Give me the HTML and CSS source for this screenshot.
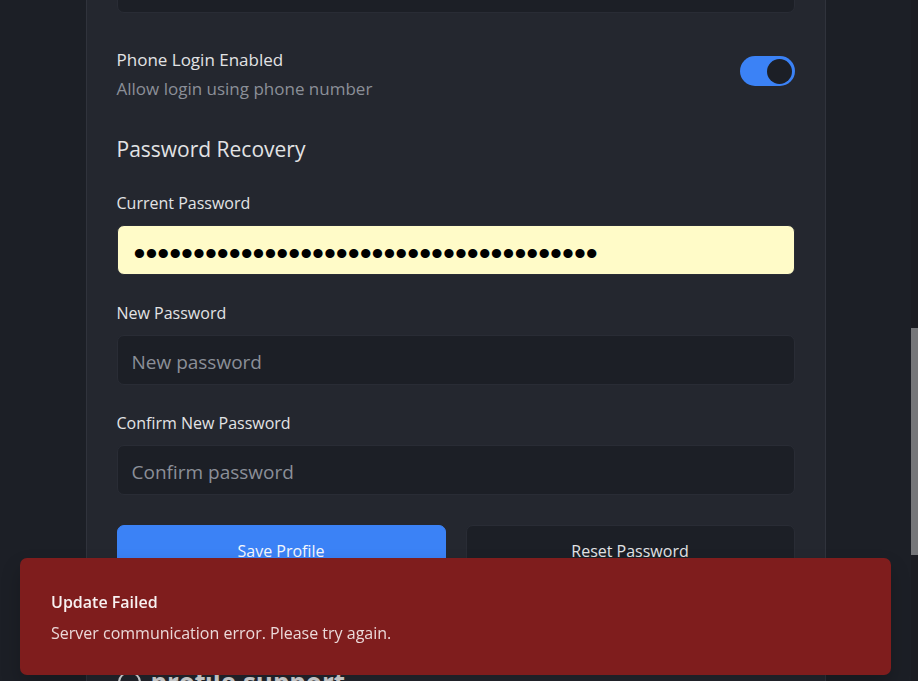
FILE: index.html
```html
<!DOCTYPE html>
<html lang="en">
<head>
<meta charset="utf-8">
<meta name="viewport" content="width=device-width, initial-scale=1">
<title>Profile settings</title>
<link rel="stylesheet" href="styles.css">
</head>
<body>
<main class="page">
  <form class="card">
    <input class="input" type="tel" aria-label="Phone number">
    <div class="setting">
      <div class="setting-text">
        <label class="setting-label" for="phone-login">Phone Login Enabled</label>
        <p class="hint">Allow login using phone number</p>
      </div>
      <input class="switch" type="checkbox" role="switch" id="phone-login" checked>
    </div>
    <h2 class="heading">Password Recovery</h2>
    <div class="field">
      <label class="label" for="current">Current Password</label>
      <input class="input input-filled" type="password" id="current" value="000000000000000000000000000000000000000">
    </div>
    <div class="field">
      <label class="label" for="new">New Password</label>
      <input class="input" type="password" id="new" placeholder="New password">
    </div>
    <div class="field">
      <label class="label" for="confirm">Confirm New Password</label>
      <input class="input" type="password" id="confirm" placeholder="Confirm password">
    </div>
    <div class="actions">
      <button class="button button-primary" type="submit">Save Profile</button>
      <button class="button" type="button">Reset Password</button>
    </div>
    <h2 class="support">
      <svg class="support-icon" viewBox="0 0 24 24" aria-hidden="true"><circle cx="12" cy="12" r="10"/></svg>
      profile support
    </h2>
  </form>
</main>
<div class="scrollbar"><div class="thumb"></div></div>
<div class="toast" role="alert">
  <strong class="toast-title">Update Failed</strong>
  <p class="toast-text">Server communication error. Please try again.</p>
</div>
</body>
</html>
```
FILE: styles.css
```css
* {
  box-sizing: border-box;
}

body {
  margin: 0;
  height: 100vh;
  overflow: hidden;
  display: flex;
  background: #1c1f26;
  color: #e2e3e5;
  font: 16px/24px "Segoe UI", "Open Sans", "Noto Sans", sans-serif;
}

p,
h2 {
  margin: 0;
}

.page {
  flex: 1;
  padding: 0 20px;
}

.card {
  max-width: 740px;
  margin: -37px auto 0;
  padding: 0 30px;
  background: #24272f;
  border: 1px solid #30333c;
  border-width: 0 1px;
}

.input {
  display: block;
  width: 100%;
  height: 50px;
  padding: 3px 14px 0;
  background: #1c1f26;
  border: 1px solid #292c35;
  border-radius: 7px;
  color: #e2e3e5;
  font: inherit;
  font-size: 19px;
}

.input::placeholder {
  color: #8b8f98;
  opacity: 1;
}

.input-filled {
  padding: 6px 16px 0;
  background: #fffbc8;
  color: #000;
  font: 34px "Liberation Sans", sans-serif;
}

.setting {
  display: flex;
  align-items: center;
  justify-content: space-between;
  margin-top: 27px;
  font-size: 17px;
}

.setting-text {
  padding-top: 8px;
}

.setting-label,
.label {
  display: block;
}

.hint {
  margin-top: 5px;
  color: #8b8f98;
}

.switch {
  appearance: none;
  display: flex;
  width: 55px;
  height: 30px;
  margin: 0;
  padding: 3px;
  border-radius: 15px;
  background: #3b82f6;
}

.switch::before {
  content: "";
  width: 25px;
  height: 25px;
  border-radius: 50%;
  background: #1c1f26;
}

.switch:checked {
  justify-content: flex-end;
}

.heading {
  margin-top: 33px;
  font-size: 21px;
  font-weight: 400;
  line-height: 30px;
}

.field {
  display: grid;
  gap: 10px;
  margin-top: 26px;
}

.heading + .field {
  margin-top: 27px;
}

.actions {
  display: grid;
  grid-template-columns: 1fr 1fr;
  gap: 20px;
  margin-top: 30px;
}

.button {
  height: 52px;
  border: 1px solid #292c35;
  border-radius: 7px;
  background: #1c1f26;
  color: inherit;
  font: inherit;
}

.button-primary {
  border-color: #3b82f6;
  background: #3b82f6;
  color: #f4f7fc;
}

.support {
  display: flex;
  align-items: center;
  gap: 9px;
  margin-top: 89px;
  font-size: 26px;
  line-height: 32px;
}

.support-icon {
  width: 25px;
  height: 25px;
  fill: none;
  stroke: currentColor;
  stroke-width: 2;
}

.scrollbar {
  width: 7px;
  background: #1b1c22;
}

.thumb {
  height: 227px;
  margin-top: 328px;
  background: #757679;
}

.toast {
  position: fixed;
  left: 20px;
  right: 27px;
  bottom: 6px;
  padding: 32px 31px 30px;
  border-radius: 7px;
  background: #7f1d1d;
  box-shadow: 0 10px 20px rgba(0, 0, 0, 0.2);
  color: #f8f1f1;
}

.toast-title {
  display: block;
  font-weight: 600;
}

.toast-text {
  margin-top: 7px;
  color: #ebd9d9;
}
```
